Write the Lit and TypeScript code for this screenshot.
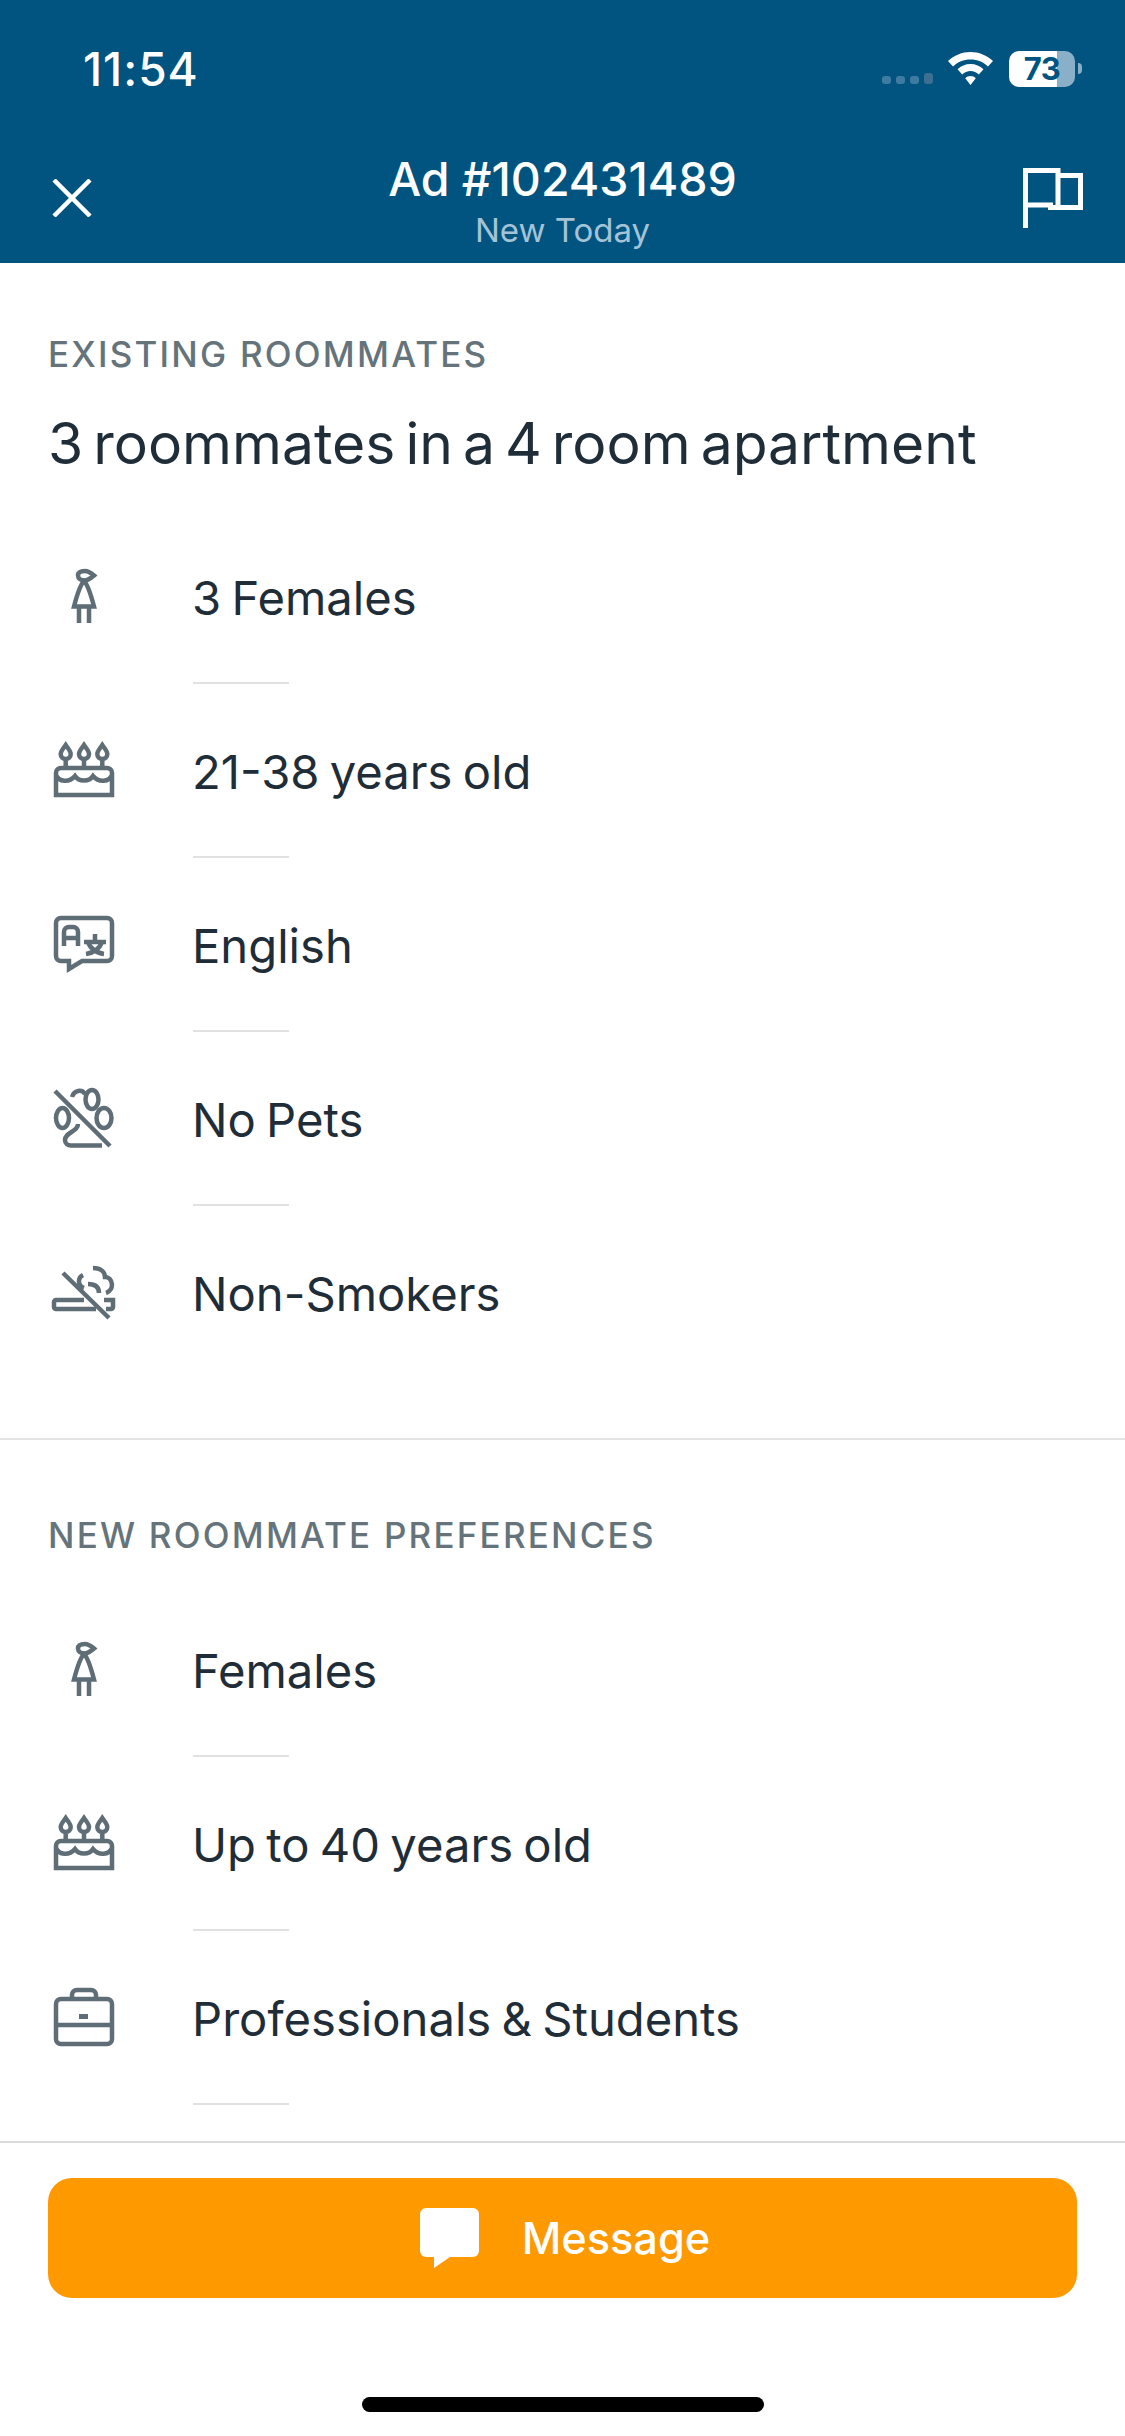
import { LitElement, html, css, svg } from "lit";
import { customElement } from "lit/decorators.js";

const person = html`<svg width="24" height="54" viewBox="0 0 24 54"><path d="M13 2C8 2 6 4 6 6.500C6 9.500 9 11.500 12.500 11.500C16 11.500 19 9 22 6.500C19 4 16 2 13 2ZM12 12C8 16 5 26 2 37.500H22C19 26 16 16 12 12ZM7 38V54M17 38V54"/></svg>`;
const flame = (x: number) => svg`<path d="M${x} 2C${x + 2} 5 ${x + 5} 8 ${x + 5} 11a5 5 0 0 1-10 0C${x - 5} 8 ${x - 2} 5 ${x} 2ZM${x} 16V25"/>`;
const cake = html`<svg width="60" height="54" viewBox="0 0 60 54"><path d="M2 52V30a5 5 0 0 1 5-5H53a5 5 0 0 1 5 5V52ZM2 32C5 39 15 40 21 33C25 39 35 39 39 33C45 40 55 39 58 32"/>${flame(11.7)}${flame(30)}${flame(48.3)}</svg>`;
const lang = html`<svg width="60" height="57" viewBox="0 0 60 57"><path d="M7 2H53a5 5 0 0 1 5 5V40a5 5 0 0 1-5 5H28L15 53V45H7a5 5 0 0 1-5-5V7a5 5 0 0 1 5-5ZM10 30V16a5 5 0 0 1 5-5h4a5 5 0 0 1 5 5V30M10 22H24M30 26H52M41 18V25M34 26C36 32 42 37 50 38M48 26C46 32 40 37 32 38"/></svg>`;
const paw = html`<svg width="60" height="60" viewBox="0 0 60 60"><path d="M1 3L56 58M18 9C20 2 28 1 31 6M24 36C24 44 11 44 11 52C11 56 14 57.500 17 57.500H48"/><ellipse cx="8.500" cy="30" rx="6.500" ry="10"/><ellipse cx="50" cy="30" rx="7.500" ry="10"/><ellipse cx="38" cy="11.500" rx="6.500" ry="9.500"/></svg>`;
const smoke = html`<svg width="64" height="53" viewBox="0 0 64 53"><path d="M11 7L57 52M32 34H4a2 2 0 0 0-2 2V41a2 2 0 0 0 2 2H44M52 34H61V41a2 2 0 0 1-2 2H54M32 22C26 20 25 12 31 9M41 2C49 2 53 6 53 11C61 11 63 24 54 27M36 18C42 18 47 20 47 27"/></svg>`;
const bag = html`<svg width="60" height="58" viewBox="0 0 60 58"><path d="M7 11H53a5 5 0 0 1 5 5V51a5 5 0 0 1-5 5H7a5 5 0 0 1-5-5V16a5 5 0 0 1 5-5ZM18 10V7a5 5 0 0 1 5-5H37a5 5 0 0 1 5 5V10M2 37H58"/><rect class="solid" x="25" y="26" width="9" height="5"/></svg>`;

const existing = [
  [person, "3 Females"],
  [cake, "21-38 years old"],
  [lang, "English"],
  [paw, "No Pets"],
  [smoke, "Non-Smokers"],
];
const wanted = [
  [person, "Females"],
  [cake, "Up to 40 years old"],
  [bag, "Professionals & Students"],
];

@customElement("app-root")
export class AppRoot extends LitElement {
  static styles = css`
    :host { display: flex; flex-direction: column; width: 1125px; height: 2436px; overflow: hidden; background: #fff; font-family: Inter, "Noto Sans", sans-serif; color: #1f2d38; }
    .head { flex: none; height: 263px; background: #00547f; color: #fff; display: flex; flex-direction: column; box-sizing: border-box; }
    .status { height: 138px; display: flex; align-items: flex-start; justify-content: space-between; padding: 0 43px 0 83px; }
    .time { font-size: 46px; font-weight: 500; line-height: 52px; margin-top: 43px; letter-spacing: 1px; }
    .sys { display: flex; align-items: flex-start; margin-top: 51px; }
    .sig { display: flex; align-items: flex-end; gap: 5px; height: 33px; margin-right: 15px; }
    .sig i { display: block; width: 9px; height: 8px; border-radius: 3px; background: #3f7ba0; }
    .sig i:last-child { height: 11px; background: #3c6f90; }
    .wifi { margin: 1px 16px 0 0; }
    .batt { position: relative; width: 66px; height: 36px; border-radius: 10px; overflow: hidden; background: linear-gradient(90deg, #fff 48px, #8aafc8 48px); color: #00547f; font-size: 31px; font-weight: 700; line-height: 36px; text-align: center; letter-spacing: -0.500px; }
    .cap { width: 4px; height: 11px; margin: 12px 0 0 3px; border-radius: 0 6px 6px 0; background: #8aafc8; }
    .nav { flex: 1; position: relative; display: flex; align-items: flex-start; justify-content: space-between; padding: 0 42px 0 52px; }
    .x { margin-top: 41px; }
    .flag { margin-top: 30px; }
    .title { position: absolute; left: 0; right: 0; top: 13px; text-align: center; }
    .t1 { font-size: 46.500px; font-weight: 500; line-height: 56px; }
    .t2 { font-size: 33px; line-height: 40px; color: #a5c3d6; margin-top: 3px; }
    .body { flex: 1; overflow: hidden; }
    .sec { padding-top: 69px; }
    .sec + .sec { border-top: 2px solid #e2e4e5; margin-top: 58px; padding-top: 73px; }
    .label { margin: 0 0 0 48px; font-size: 35px; font-weight: 500; line-height: 44px; letter-spacing: 2.200px; color: #65737b; }
    .h { margin: 36px 0 0 48px; font-size: 57px; font-weight: 400; line-height: 64px; word-spacing: -6px; color: #1f2d38; }
    .rows { padding-top: 34px; }
    .sec + .sec .rows { padding-top: 26px; }
    .row { display: grid; grid-template-columns: 139px 96px; grid-template-rows: 166px 2px; padding: 6px 0 0 54px; }
    .ico { width: 60px; height: 160px; display: flex; align-items: center; justify-content: center; }
    .ico svg { fill: none; stroke: #5f6e76; stroke-width: 4.500; overflow: visible; }
    .ico svg .solid { fill: #5f6e76; stroke: none; }
    .txt { font-size: 47.200px; line-height: 164px; white-space: nowrap; word-spacing: -3px; color: #1f2d38; margin-left: -1px; }
    .sep { grid-column: 2; background: #dfe1e2; }
    .foot { flex: none; height: 295px; box-sizing: border-box; border-top: 2px solid #d8dadb; padding-top: 35px; display: flex; flex-direction: column; align-items: center; }
    .btn { width: 1029px; height: 120px; box-sizing: border-box; padding-left: 5px; border-radius: 24px; background: #ff9900; color: #fff; display: flex; align-items: center; justify-content: center; gap: 43px; font-size: 43.300px; font-weight: 500; }
    .home { width: 402px; height: 15px; border-radius: 8px; background: #000; margin-top: 99px; }
  `;

  private rows(items: unknown[][], lastSep: boolean) {
    return items.map(
      ([icon, label], i) => html`<div class="row">
        <div class="ico">${icon}</div>
        <div class="txt">${label}</div>
        ${i < items.length - 1 || lastSep ? html`<div class="sep"></div>` : ""}
      </div>`
    );
  }

  render() {
    return html`
      <div class="head">
        <div class="status">
          <div class="time">11:54</div>
          <div class="sys">
            <div class="sig"><i></i><i></i><i></i><i></i></div>
            <svg class="wifi" width="45" height="33" viewBox="0 0 45 33" fill="#fff"><path d="M22.500 0C31 0 39 3.400 45 9L40 14.500C35.500 10 29.300 7.500 22.500 7.500C15.700 7.500 9.500 10 5 14.500L0 9C6 3.400 14 0 22.500 0ZM22.500 12C27.500 12 32 14 35.500 17.300L30.800 22.500C28.500 20.300 25.700 19 22.500 19C19.300 19 16.500 20.300 14.200 22.500L9.500 17.300C13 14 17.500 12 22.500 12ZM22.500 24C24.600 24 26.400 24.800 27.800 26.200L22.500 33L17.200 26.200C18.600 24.800 20.400 24 22.500 24Z"/></svg>
            <div class="batt">73</div>
            <div class="cap"></div>
          </div>
        </div>
        <div class="nav">
          <svg class="x" width="40" height="38" viewBox="0 0 40 38" fill="none" stroke="#fff" stroke-width="4.500"><path d="M2 1L38 37M38 1L2 37"/></svg>
          <div class="title"><div class="t1">Ad #102431489</div><div class="t2">New Today</div></div>
          <svg class="flag" width="60" height="60" viewBox="0 0 60 60" fill="none" stroke="#fff" stroke-width="5"><path d="M2.500 60V2.500H35V37M2.500 37H27.500V39.500H57.500V7.500H35"/></svg>
        </div>
      </div>
      <div class="body">
        <div class="sec">
          <div class="label">EXISTING ROOMMATES</div>
          <div class="h">3 roommates in a 4 room apartment</div>
          <div class="rows">${this.rows(existing, false)}</div>
        </div>
        <div class="sec">
          <div class="label">NEW ROOMMATE PREFERENCES</div>
          <div class="rows">${this.rows(wanted, true)}</div>
        </div>
      </div>
      <div class="foot">
        <div class="btn">
          <svg width="59" height="60" viewBox="0 0 59 60" fill="#fff"><path d="M6 0H53a6 6 0 0 1 6 6V43a6 6 0 0 1-6 6H30L14 60V49H6a6 6 0 0 1-6-6V6a6 6 0 0 1 6-6Z"/></svg>
          <span>Message</span>
        </div>
        <div class="home"></div>
      </div>
    `;
  }
}
